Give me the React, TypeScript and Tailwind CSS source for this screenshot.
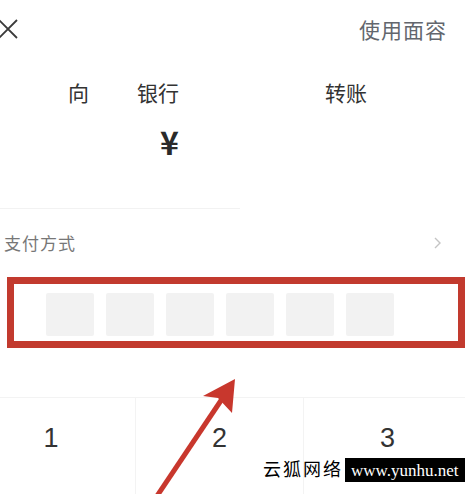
import React from 'react';

// Payment confirmation sheet with highlight annotation
const App = () => {
  const slots = [0, 1, 2, 3, 4, 5];

  return (
    <div
      className="relative w-[465px] h-[494px] overflow-hidden bg-white text-[#333]"
      style={{ fontFamily: '"Noto Sans CJK SC", "Noto Sans", sans-serif' }}
    >
      {/* header */}
      <header className="h-[60px] flex items-center justify-between pr-[18px]">
        <svg width="20" height="20" viewBox="0 0 20 20" className="-ml-[2px] mt-[-2px]">
          <path d="M1 1 L19 19 M19 1 L1 19" stroke="#3a3a3a" strokeWidth="1.8" fill="none" />
        </svg>
        <span className="text-[21px] text-[#62666d] tracking-[1px]">使用面容</span>
      </header>

      {/* payee */}
      <div className="mt-[10px] flex items-center h-[46px] pl-[68px] text-[21px] text-[#333]">
        <span>向</span>
        <span className="ml-[48px]">银行</span>
        <span className="ml-[146px]">转账</span>
      </div>

      {/* amount */}
      <div className="pl-[160px] h-[50px] flex items-center">
        <span className="text-[32px] font-bold text-[#2a2a2a] leading-none">¥</span>
      </div>

      {/* divider */}
      <div className="mt-[42px] w-[240px] h-px bg-[#f2f2f2]" />

      {/* payment method */}
      <div className="h-[68px] flex items-center justify-between pl-[4px] pr-[22px]">
        <span className="text-[17px] text-[#777] tracking-[1px]">支付方式</span>
        <svg width="10" height="14" viewBox="0 0 10 14">
          <path d="M2 2 L7 7 L2 12" stroke="#c4c4c4" strokeWidth="1.4" fill="none" />
        </svg>
      </div>

      {/* password slots, highlighted */}
      <div className="ml-[7px] h-[71px] border-[7px] border-[#c23a2e] flex items-start pt-[9px] pl-[32px] gap-[12px]">
        {slots.map((s) => (
          <div key={s} className="w-[48px] h-[43px] rounded-[2px] bg-[#f2f2f2]" />
        ))}
      </div>

      {/* keypad */}
      <div className="mt-[49px] h-px bg-[#f3f3f3]" />
      <div className="grid grid-cols-3 w-[504px] -ml-[33px] h-[96px]">
        {['1', '2', '3'].map((n, i) => (
          <div
            key={n}
            className={`flex justify-center pt-[20px] text-[27px] text-[#333] ${i > 0 ? 'border-l border-[#f3f3f3]' : ''}`}
            style={{ fontFamily: '"Liberation Sans", Arial, sans-serif' }}
          >
            {n}
          </div>
        ))}
      </div>

      {/* annotation arrow */}
      <svg className="absolute left-0 top-0 pointer-events-none" width="465" height="494" viewBox="0 0 465 494">
        <path d="M157 496 L226 393" stroke="#c8372d" strokeWidth="5" fill="none" />
        <path d="M235 379 L203 396 L218 398 L232 413 Z" fill="#c8372d" />
      </svg>

      {/* watermark */}
      <div className="absolute left-[263px] top-[458px] flex items-center" style={{ fontFamily: '"Liberation Serif", "Noto Sans CJK SC", serif' }}>
        <span className="text-[18px] text-black tracking-[2px] leading-none">云狐网络</span>
        <span className="ml-[2px] bg-black text-white text-[17px] leading-none px-[6px] h-[24px] flex items-center">
          www.yunhu.net
        </span>
      </div>
    </div>
  );
};

export default App;
